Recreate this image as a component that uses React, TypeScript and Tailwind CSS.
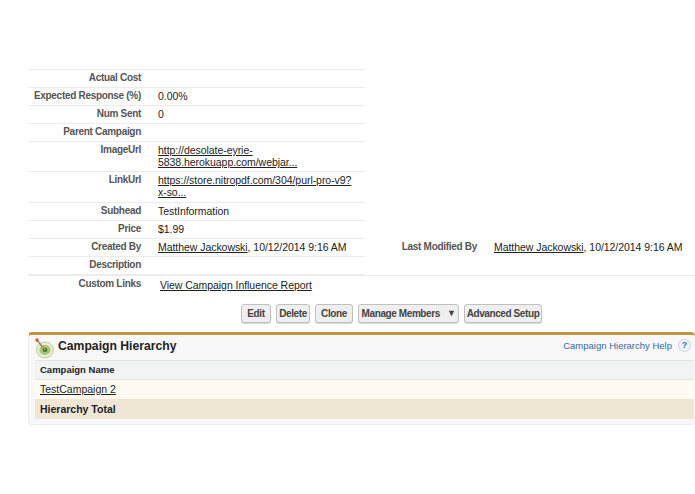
const rows: { label: string; value?: React.ReactNode; h?: string }[] = [
  { label: 'Actual Cost' },
  { label: 'Expected Response (%)', value: '0.00%' },
  { label: 'Num Sent', value: '0' },
  { label: 'Parent Campaign' },
  {
    label: 'ImageUrl',
    value: <u>http://desolate-eyrie-<br />5838.herokuapp.com/webjar...</u>,
    h: 'h-[30px]',
  },
  {
    label: 'LinkUrl',
    value: <u>https://store.nitropdf.com/304/purl-pro-v9?<br />x-so...</u>,
    h: 'h-[31px]',
  },
  { label: 'Subhead', value: 'TestInformation' },
  { label: 'Price', value: '$1.99' },
  { label: 'Created By', value: <><u>Matthew Jackowski</u>, 10/12/2014 9:16 AM</> },
  { label: 'Description' },
];

function Btn({ children, w }: { children: React.ReactNode; w: string }) {
  return (
    <button className={`${w} h-[19px] flex items-center justify-center gap-[7px] whitespace-nowrap rounded-[3px] border border-[#c0c0c0] bg-[#efefef] text-[10px] tracking-[-0.4px] font-bold text-[#444444] shadow-[0_1px_0_#d8d8d8]`}>
      {children}
    </button>
  );
}

export default function App() {
  return (
    <div className="w-[695px] h-[494px] overflow-hidden bg-white pt-[69px] font-['Liberation_Sans',Arial,sans-serif] text-[#222222]">
      <div className="ml-[28px] flex">
        <div className="w-[337px] border-t border-[#ececec]">
          {rows.map((r) => (
            <div key={r.label} className={`flex border-b border-[#ececec] ${r.h ?? 'h-[18px]'}`}>
              <div className="w-[113px] shrink-0 pt-[1px] text-right text-[10px] tracking-[-0.3px] leading-[13px] font-bold whitespace-nowrap text-[#555555]">{r.label}</div>
              <div className="ml-[17px] pt-[2px] text-[10.5px] leading-[12px] tracking-[-0.05px]">{r.value}</div>
            </div>
          ))}
        </div>
        <div className="mt-[170px] flex h-[18px] items-start pt-[1px]">
          <div className="w-[112px] text-right text-[10px] tracking-[-0.3px] leading-[13px] font-bold text-[#555555]">Last Modified By</div>
          <div className="ml-[17px] pt-[1px] text-[10.5px] leading-[12px] tracking-[-0.05px] whitespace-nowrap"><u>Matthew Jackowski</u>, 10/12/2014 9:16 AM</div>
        </div>
      </div>
      <div className="ml-[28px] border-t border-[#ececec] flex h-[26px]">
        <div className="w-[113px] pt-[1px] text-right text-[10px] tracking-[-0.3px] leading-[13px] font-bold text-[#555555]">Custom Links</div>
        <div className="ml-[19px] pt-[2px] text-[10.5px] leading-[14px] tracking-[-0.05px]"><u>View Campaign Influence Report</u></div>
      </div>
      <div className="ml-[241px] mt-[3px] flex gap-[5px]">
        <Btn w="w-[30px]">Edit</Btn>
        <Btn w="w-[34px]">Delete</Btn>
        <Btn w="w-[38px]">Clone</Btn>
        <Btn w="w-[101px]">
          Manage Members
          <span className="text-[9px] leading-none">▼</span>
        </Btn>
        <Btn w="w-[78px]">Advanced Setup</Btn>
      </div>
      <div className="ml-[28px] mt-[9px] h-[93px] rounded-[4px] border-t-[3px] border-b border-l border-[#ececec] border-t-[#c2953f] bg-[#f8f8f8]">
        <div className="flex h-[25px] items-center pb-[2px] pl-[5px] pr-[4px]">
          <svg width="20" height="22" viewBox="0 0 20 22" className="shrink-0 mt-[2px]">
            <ellipse cx="11" cy="13" rx="8.5" ry="8" fill="#e6eccb" stroke="#c4cf9f" />
            <ellipse cx="11" cy="13" rx="5.5" ry="5" fill="#a9c477" />
            <ellipse cx="11" cy="13" rx="2.5" ry="2.2" fill="#3f8a3a" />
            <path d="M3 3 L11 13" stroke="#a9825f" strokeWidth="1.6" />
            <path d="M1 2 L4 1 L5 4 L2 5 Z" fill="#d0674a" />
          </svg>
          <div className="ml-[4px] text-[12.2px] font-bold text-[#222222]">Campaign Hierarchy</div>
          <div className="ml-auto text-[9.5px] text-[#2f6aa5]">Campaign Hierarchy Help</div>
          <div className="ml-[6px] -mt-[2px] flex h-[13px] w-[13px] items-center justify-center rounded-full border border-[#c9d6e6] bg-[#eef2f8] text-[9px] font-bold text-[#3d6fb0]">?</div>
        </div>
        <div className="ml-[6px] mr-[1px] border-t border-[#e3e3e3]">
          <div className="flex h-[19px] items-center border-b border-[#e3e3e3] bg-[#f2f3f3] pt-[1px] pl-[5px] text-[9.5px] font-bold">Campaign Name</div>
          <div className="flex h-[19px] items-center bg-[#fffbf2] pl-[5px] text-[10.5px]"><u>TestCampaign 2</u></div>
          <div className="flex h-[20px] items-center bg-[#f0e6d4] pt-[1px] pl-[5px] text-[10.5px] font-bold">Hierarchy Total</div>
        </div>
      </div>
    </div>
  );
}
